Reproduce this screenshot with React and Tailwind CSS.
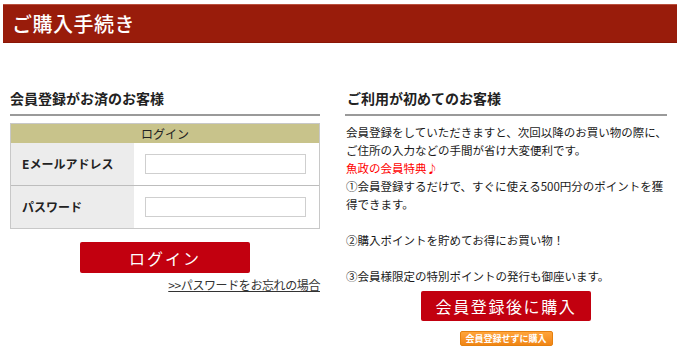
import React from "react";

const font = { fontFamily: '"Noto Sans CJK JP", "Noto Sans", sans-serif' };

export default function App() {
  return (
    <div className="w-[680px] h-[353px] bg-white text-[#222] overflow-hidden" style={font}>
      <div className="mx-[3px] mt-[4px] h-[39px] bg-[#991c0b] border-t border-[#b9503e] border-b border-b-[#8a1606] flex items-center pl-[9px]">
        <span className="text-white text-[20px] font-medium leading-none tracking-[0.5px]">ご購入手続き</span>
      </div>

      <div className="flex pt-[45px] pl-[10px] gap-[25px]">
        {/* left column */}
        <div className="w-[310px] flex flex-col">
          <div className="h-[20px] leading-[20px] text-[14px] font-bold">会員登録がお済のお客様</div>
          <div className="mt-[6px] border-b-2 border-[#9a9a9a]"></div>
          <div className="mt-[7px] border border-[#c8c8c8]">
            <div className="h-[19px] bg-[#c8c38b] flex items-center justify-center text-[12px] leading-none">ログイン</div>
            <div className="flex h-[42px]">
              <div className="w-[123px] bg-[#ececec] flex items-center pl-[11px] text-[12px] font-bold">Eメールアドレス</div>
              <div className="flex-1 flex items-center pl-[11px]">
                <div className="w-[161px] h-[20px] border border-[#cfcfcf] bg-white"></div>
              </div>
            </div>
            <div className="flex h-[43px] border-t border-[#bdbdbd]">
              <div className="w-[123px] bg-[#ececec] flex items-center pl-[11px] text-[12px] font-bold">パスワード</div>
              <div className="flex-1 flex items-center pl-[11px]">
                <div className="w-[161px] h-[20px] border border-[#cfcfcf] bg-white"></div>
              </div>
            </div>
          </div>
          <div className="mt-[13px] mx-auto w-[170px] h-[31px] bg-[#c2000f] rounded-[2px] flex items-center justify-center text-white text-[16px] tracking-[2px] leading-none">ログイン</div>
          <div className="mt-[4px] self-end text-[12px] leading-[16px] underline text-[#333] tracking-[-0.4px]">&gt;&gt;パスワードをお忘れの場合</div>
        </div>

        {/* right column */}
        <div className="w-[322px] flex flex-col">
          <div className="h-[20px] leading-[20px] text-[14px] font-bold pl-[2px]">ご利用が初めてのお客様</div>
          <div className="mt-[6px] border-b-2 border-[#9a9a9a]"></div>
          <p className="mt-[7px] pl-[1px] text-[11.5px] leading-[18px] whitespace-nowrap text-[#1a1a1a]">
            会員登録をしていただきますと、次回以降のお買い物の際に、<br />
            ご住所の入力などの手間が省け大変便利です。<br />
            <span className="text-[#ff0000]">魚政の会員特典♪</span><br />
            ①会員登録するだけで、すぐに使える500円分のポイントを獲<br />
            得できます。<br />
            <br />
            ②購入ポイントを貯めてお得にお買い物！<br />
            <br />
            ③会員様限定の特別ポイントの発行も御座います。
          </p>
          <div className="mt-[6px] mx-auto w-[170px] h-[30px] bg-[#c2000f] rounded-[2px] flex items-center justify-center text-white text-[16px] tracking-[1.6px] leading-none">会員登録後に購入</div>
          <div className="mt-[10px] mx-auto w-[93px] h-[15px] rounded-[2px] bg-gradient-to-b from-[#ffa43a] to-[#f08512] border border-[#e5800f] flex items-center justify-center text-white text-[9px] font-bold leading-none">会員登録せずに購入</div>
        </div>
      </div>
    </div>
  );
}
